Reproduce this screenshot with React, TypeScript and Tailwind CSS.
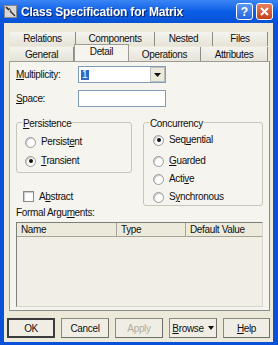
import React from "react";

const font = { fontFamily: '"Liberation Sans", Arial, sans-serif' };
const txt = "text-[10px] tracking-[-0.35px] text-[#111]";

function Radio({ checked, label }: { checked?: boolean; label: React.ReactNode }) {
  return (
    <div className="flex items-center gap-[5px] h-[12px]">
      <div className="w-[11px] h-[11px] rounded-full border border-[#9a9a9a] bg-white flex items-center justify-center shadow-[inset_1px_1px_1px_#c8c8c8]">
        {checked && <div className="w-[4px] h-[4px] rounded-full bg-[#111]" />}
      </div>
      <span className={`${txt} leading-none`}>{label}</span>
    </div>
  );
}

function Btn({ children, def, disabled, w }: { children: React.ReactNode; def?: boolean; disabled?: boolean; w: string }) {
  return (
    <div
      className={`${w} h-[20px] flex items-center justify-center text-[10px] tracking-[-0.35px] bg-[#efede4] ${
        def ? "border-2 border-[#3c3c3c]" : "border border-[#8a8a84] border-r-[#6f6f6a] border-b-[#6f6f6a]"
      } ${disabled ? "text-[#b0aea0]" : "text-[#111]"}`}
    >
      {children}
    </div>
  );
}

function Tab({ label, w, sel, top }: { label: string; w: string; sel?: boolean; top?: boolean }) {
  return (
    <div
      className={`${w} flex justify-center ${txt} border-r border-[#8d8c86] ${
        sel
          ? "bg-[#f5f4ef] h-[17px] -mt-[3px] pt-[1px] leading-[12px] border-l border-t border-[#9c9b94] z-10 relative items-start"
          : top
          ? "h-[14px] items-start pt-[1px] leading-[11px] bg-gradient-to-b from-[#f4f3ee] to-[#e6e4d8]"
          : "h-[14px] items-center bg-gradient-to-b from-[#f4f3ee] to-[#e6e4d8]"
      }`}
    >
      {label}
    </div>
  );
}

export default function App() {
  return (
    <div className="w-[278px] h-[345px] bg-[#0a50d8] flex flex-col overflow-hidden" style={font}>
      {/* title bar */}
      <div className="h-[23px] flex items-center bg-gradient-to-b from-[#3a85f4] via-[#0a5ee6] to-[#0852d6] px-[4px]">
        <div className="w-[13px] h-[13px] flex items-center justify-center mr-[4px]">
          <svg width="13" height="13" viewBox="0 0 13 13">
            <rect x="0.5" y="0.5" width="12" height="12" fill="#d8d8d8" stroke="#8a8a8a" />
            <path d="M2 2 L5 5" stroke="#222" strokeWidth="1.6" />
            <path d="M5 3 L7 6" stroke="#555" strokeWidth="1.2" />
            <path d="M6 6 L11 11" stroke="#333" strokeWidth="1.4" />
          </svg>
        </div>
        <span className="text-white font-bold text-[12px] tracking-[-0.2px] drop-shadow-[1px_1px_0_#0a246a]">
          Class Specification for Matrix
        </span>
        <div className="ml-auto flex gap-[3px] mr-[1px]">
          <div className="w-[17px] h-[17px] rounded-[3px] border border-white bg-gradient-to-b from-[#5b97f5] to-[#2467dc] flex items-center justify-center text-white font-bold text-[12px]">
            ?
          </div>
          <div className="w-[17px] h-[17px] rounded-[3px] border border-white bg-gradient-to-b from-[#e8805e] to-[#c4401c] flex items-center justify-center">
            <svg width="9" height="9" viewBox="0 0 9 9">
              <path d="M1 1 L8 8 M8 1 L1 8" stroke="white" strokeWidth="2" />
            </svg>
          </div>
        </div>
      </div>

      {/* body */}
      <div className="ml-[4px] mr-[5px] h-[319px] bg-[#ece9d8] flex flex-col">
        {/* tabs */}
        <div className="pt-[9px] pl-[6px] flex flex-col">
          <div className="flex">
            <Tab top label="Relations" w="w-[66px]" />
            <Tab top label="Components" w="w-[79px]" />
            <Tab top label="Nested" w="w-[58px]" />
            <Tab top label="Files" w="w-[55px]" />
          </div>
          <div className="flex mt-[1px]">
            <Tab label="General" w="w-[64px]" />
            <Tab label="Detail" w="w-[55px]" sel />
            <Tab label="Operations" w="w-[72px]" />
            <Tab label="Attributes" w="w-[67px]" />
          </div>
        </div>

        {/* panel */}
        <div className="ml-[5px] w-[261px] h-[250px] bg-[#f5f4ef] border border-[#9c9b94] border-r-[#8d8c86] border-b-[#8d8c86] relative pt-[4px] pl-[6px]">
          <div className="flex items-center h-[17px]">
            <span className={`${txt} w-[62px]`}><u>M</u>ultiplicity:</span>
            <div className="w-[88px] h-[17px] bg-white border border-[#7f9db9] flex items-center">
              <span className="ml-[2px] bg-[#316ac5] text-white text-[10px] leading-none px-[1px]">1</span>
              <div className="ml-auto w-[15px] h-[15px] bg-[#ece9d8] border border-[#c0c0c0] flex items-center justify-center">
                <svg width="7" height="4" viewBox="0 0 7 4"><path d="M0 0 H7 L3.5 4 Z" fill="#111" /></svg>
              </div>
            </div>
          </div>
          <div className="flex items-center h-[17px] mt-[7px]">
            <span className={`${txt} w-[62px]`}><u>S</u>pace:</span>
            <div className="w-[88px] h-[17px] bg-white border border-[#7f9db9]" />
          </div>

          <div className="flex mt-[15px] gap-[11px]">
            <div className="flex flex-col">
              <div className="w-[116px] h-[51px] border border-[#c8c6b8] rounded-[3px] relative pt-[13px] pl-[8px] flex flex-col gap-[7px]">
                <span className={`absolute -top-[7px] left-[5px] bg-[#f5f4ef] px-[1px] ${txt}`}><u>P</u>ersistence</span>
                <Radio label={<>Persist<u>e</u>nt</>} />
                <Radio checked label={<><u>T</u>ransient</>} />
              </div>
              <div className="flex items-center gap-[5px] mt-[16px] ml-[7px]">
                <div className="w-[11px] h-[11px] bg-white border border-[#8a8a8a] shadow-[inset_1px_1px_1px_#c8c8c8]" />
                <span className={txt}>A<u>b</u>stract</span>
              </div>
            </div>
            <div className="w-[120px] h-[84px] border border-[#c8c6b8] rounded-[3px] relative pt-[11px] pl-[9px] flex flex-col">
              <span className={`absolute -top-[7px] left-[5px] bg-[#f5f4ef] px-[1px] ${txt}`}>Concurrency</span>
              <Radio checked label={<>Seq<u>u</u>ential</>} />
              <div className="mt-[9px]"><Radio label={<><u>G</u>uarded</>} /></div>
              <div className="mt-[6px]"><Radio label={<>Acti<u>v</u>e</>} /></div>
              <div className="mt-[6px]"><Radio label={<>S<u>y</u>nchronous</>} /></div>
            </div>
          </div>

          <div className={`${txt} mt-[1px] leading-[12px]`}>Formal Argu<u>m</u>ents:</div>
          <div className="w-[247px] h-[85px] mt-[3px] bg-[#f1efe5] border border-[#7f7f7a] border-r-[#d8d6cc] border-b-[#d8d6cc] flex flex-col">
            <div className="flex h-[14px] bg-[#ebeadb] border-b border-[#a5a497]">
              <div className={`w-[100px] border-r border-[#a5a497] pl-[4px] leading-[14px] ${txt}`}>Name</div>
              <div className={`w-[69px] border-r border-[#a5a497] pl-[4px] leading-[14px] ${txt}`}>Type</div>
              <div className={`flex-1 pl-[4px] leading-[14px] ${txt}`}>Default Value</div>
            </div>
          </div>
        </div>

        {/* buttons */}
        <div className="flex gap-[6px] pl-[3px] mt-[7px]">
          <Btn def w="w-[48px]">OK</Btn>
          <Btn w="w-[48px]">Cancel</Btn>
          <Btn disabled w="w-[48px]">Apply</Btn>
          <Btn w="w-[48px]">
            <span className="flex items-center gap-[4px]"><span><u>B</u>rowse</span>
              <svg width="6" height="4" viewBox="0 0 6 4"><path d="M0 0 H6 L3 4 Z" fill="#111" /></svg>
            </span>
          </Btn>
          <Btn w="w-[47px]"><u>H</u>elp</Btn>
        </div>
      </div>
    </div>
  );
}
